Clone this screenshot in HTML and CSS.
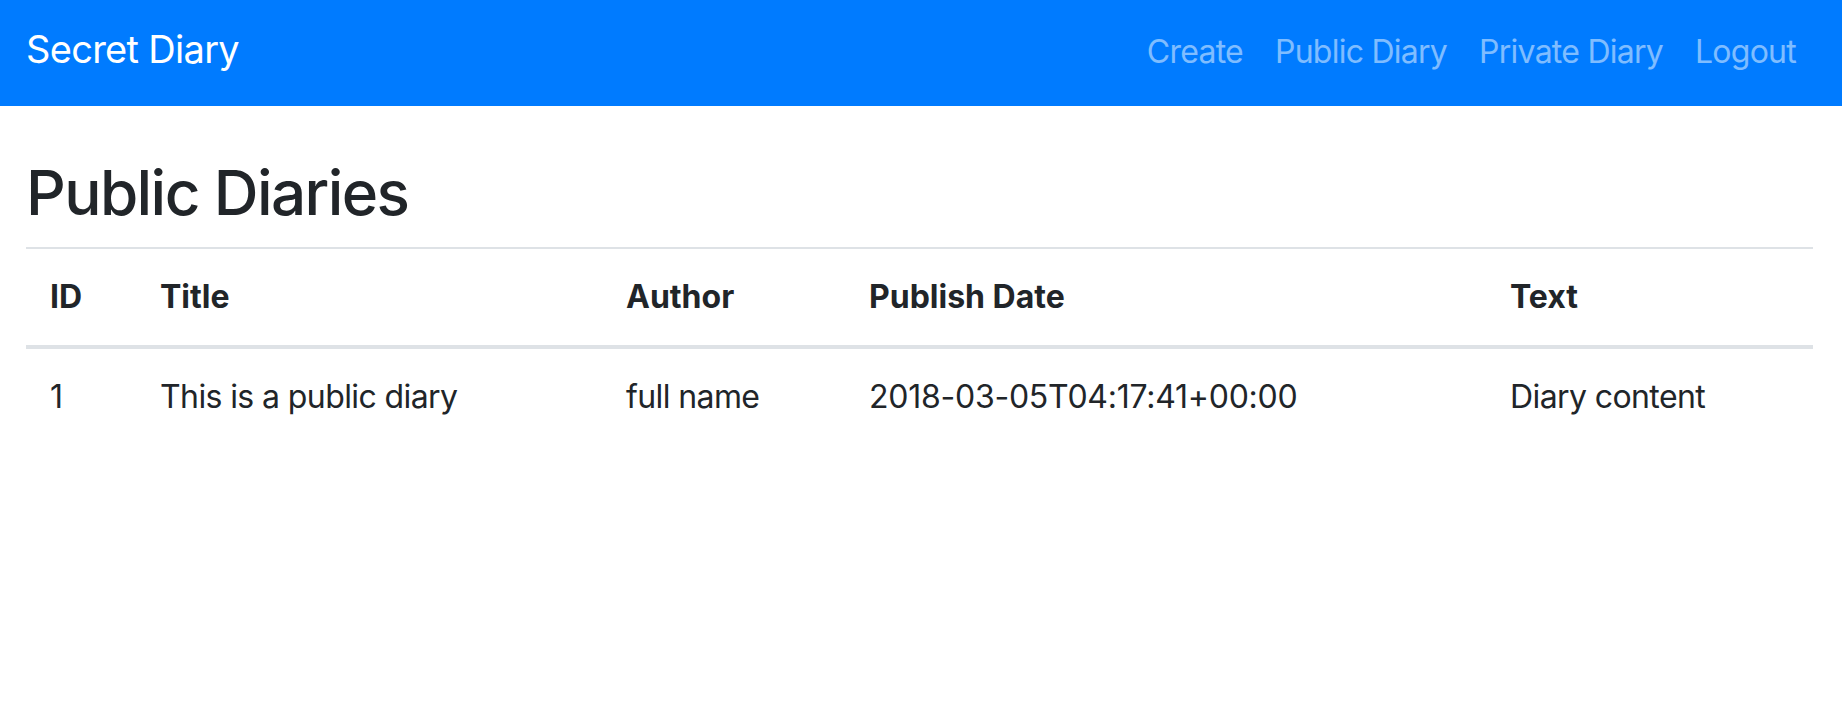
FILE: index.html
```html
<!DOCTYPE html>
<html lang="en">
<head>
<meta charset="utf-8">
<title>Secret Diary</title>
<link rel="stylesheet" href="styles.css">
</head>
<body>
<nav class="navbar">
  <a class="brand" href="#">Secret Diary</a>
  <ul class="nav">
    <li><a class="nav-link" href="#">Create</a></li>
    <li><a class="nav-link" href="#">Public Diary</a></li>
    <li><a class="nav-link" href="#">Private Diary</a></li>
    <li><a class="nav-link" href="#">Logout</a></li>
  </ul>
</nav>
<main class="container">
  <h1 class="title">Public Diaries</h1>
  <table class="table">
    <colgroup>
      <col class="col-id">
      <col class="col-title">
      <col class="col-author">
      <col class="col-date">
      <col class="col-text">
    </colgroup>
    <thead>
      <tr>
        <th>ID</th>
        <th>Title</th>
        <th>Author</th>
        <th>Publish Date</th>
        <th>Text</th>
      </tr>
    </thead>
    <tbody>
      <tr>
        <td>1</td>
        <td>This is a public diary</td>
        <td>full name</td>
        <td class="cell-date">2018-03-05T04:17:41+00:00</td>
        <td>Diary content</td>
      </tr>
    </tbody>
  </table>
</main>
</body>
</html>
```
FILE: styles.css
```css
* { box-sizing: border-box; }
html, body {
  margin: 0;
  padding: 0;
  background: #fff;
  font-family: Inter, "Noto Sans", "Liberation Sans", sans-serif;
  color: #212529;
}
a { text-decoration: none; }

.navbar {
  height: 106px;
  background: #007bff;
  display: flex;
  align-items: baseline;
  justify-content: space-between;
  padding: 21px 30px 0 26px;
}
.brand {
  color: #fff;
  font-size: 38px;
  line-height: 57px;
  font-weight: 400;
  letter-spacing: -0.7px;
}
.nav {
  list-style: none;
  margin: 0;
  padding: 0;
  display: flex;
  align-items: baseline;
}
.nav-link {
  display: block;
  color: rgba(255, 255, 255, 0.5);
  font-size: 32px;
  line-height: 48px;
  padding: 0 16px;
  letter-spacing: -0.75px;
}

.container {
  padding: 50px 29px 0 26px;
}
.title {
  margin: 0 0 17px 0;
  font-size: 62px;
  line-height: 74px;
  font-weight: 500;
  letter-spacing: -1.6px;
}
.table {
  width: 100%;
  border-collapse: collapse;
  table-layout: fixed;
  font-size: 32px;
  line-height: 48px;
}
.col-id { width: 110px; }
.col-title { width: 466px; }
.col-author { width: 243px; }
.col-date { width: 641px; }
.col-text { width: auto; }
.table th,
.table td {
  text-align: left;
  padding: 24px;
  border-top: 2px solid #dee2e6;
  vertical-align: top;
  white-space: nowrap;
}
.table th {
  font-weight: 700;
  border-bottom: 4px solid #dee2e6;
}
.table td {
  letter-spacing: -0.6px;
}
.table .cell-date {
  letter-spacing: -0.25px;
}
```
